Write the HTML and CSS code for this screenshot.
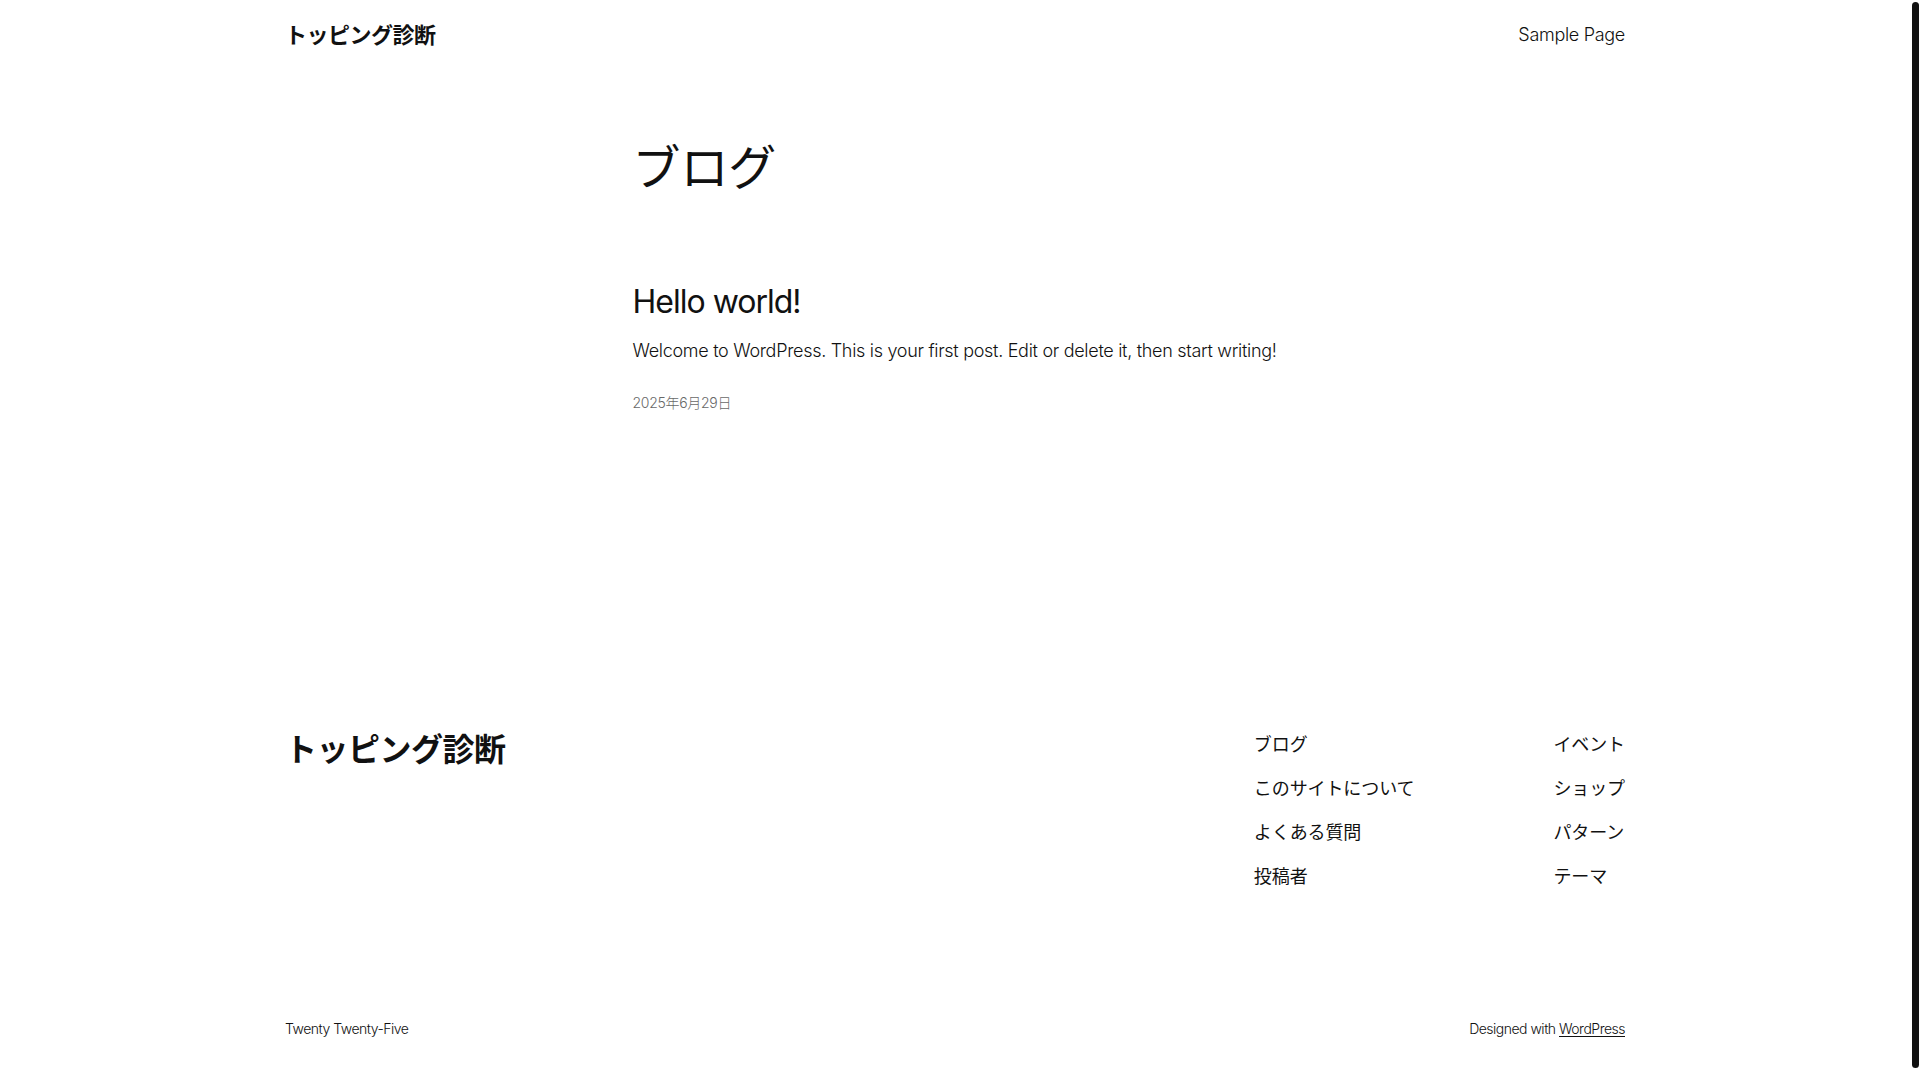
FILE: index.html
```html
<!DOCTYPE html>
<html lang="ja">
<head>
<meta charset="utf-8">
<title>ブログ – トッピング診断</title>
<link rel="stylesheet" href="styles.css">
</head>
<body>
<header class="site-header wrap">
  <p class="site-title"><a href="#">トッピング診断</a></p>
  <nav class="header-nav"><a href="#">Sample Page</a></nav>
</header>

<main class="site-main">
  <h1 class="query-title">ブログ</h1>
  <article class="post">
    <h2 class="post-title"><a href="#">Hello world!</a></h2>
    <p class="post-excerpt">Welcome to WordPress. This is your first post. Edit or delete it, then start writing!</p>
    <p class="post-date">2025年6月29日</p>
  </article>
</main>

<footer class="site-footer">
  <div class="footer-top wrap">
    <p class="footer-title"><a href="#">トッピング診断</a></p>
    <div class="footer-navs">
      <ul class="footer-nav">
        <li><a href="#">ブログ</a></li>
        <li><a href="#">このサイトについて</a></li>
        <li><a href="#">よくある質問</a></li>
        <li><a href="#">投稿者</a></li>
      </ul>
      <ul class="footer-nav">
        <li><a href="#">イベント</a></li>
        <li><a href="#">ショップ</a></li>
        <li><a href="#">パターン</a></li>
        <li><a href="#">テーマ</a></li>
      </ul>
    </div>
  </div>
  <div class="footer-bottom wrap">
    <p class="credit">Twenty Twenty-Five</p>
    <p class="credit">Designed with <a href="#" class="credit-link">WordPress</a></p>
  </div>
</footer>

<div class="scrollbar-thumb" aria-hidden="true"></div>
</body>
</html>
```

FILE: styles.css
```css
html {
  background: #ffffff;
}

body {
  margin: 0 10px 0 0;
  background: #ffffff;
  color: #111111;
  font-family: Inter, "Noto Sans CJK JP", sans-serif;
  font-weight: 300;
  font-size: 18px;
  line-height: 1.4;
  letter-spacing: -0.3px;
}

a {
  color: inherit;
  text-decoration: none;
}

p, h1, h2, ul {
  margin: 0;
  padding: 0;
}

.wrap {
  max-width: 1340px;
  margin-left: auto;
  margin-right: auto;
}

/* Header */
.site-header {
  display: flex;
  justify-content: space-between;
  align-items: center;
  padding-top: 18px;
  padding-bottom: 20px;
}

.site-title {
  font-family: "Noto Sans CJK JP", sans-serif;
  font-weight: 700;
  font-size: 22px;
  line-height: 1.4;
  letter-spacing: -0.5px;
}

.header-nav {
  font-size: 18px;
  padding-top: 2px;
}

/* Main */
.site-main {
  width: 645px;
  margin: 0 auto;
}

.query-title {
  font-family: "Noto Sans CJK JP", sans-serif;
  font-weight: 400;
  font-size: 48px;
  line-height: 1.125;
  letter-spacing: -0.1px;
  margin-top: 68px;
}

.post {
  padding-top: 93px;
}

.post-title {
  font-weight: 400;
  font-size: 32px;
  line-height: 1.125;
  letter-spacing: -1px;
}

.post-excerpt {
  margin-top: 18px;
  white-space: nowrap;
}

.post-date {
  margin-top: 30px;
  font-size: 14px;
  letter-spacing: -0.3px;
  color: #686868;
}

/* Footer */
.site-footer {
  padding-top: 312px;
  padding-bottom: 50px;
}

.footer-top {
  display: flex;
  justify-content: space-between;
  align-items: flex-start;
}

.footer-title {
  font-family: "Noto Sans CJK JP", sans-serif;
  font-weight: 700;
  font-size: 32px;
  line-height: 1.4;
  letter-spacing: -0.5px;
}

.footer-navs {
  display: flex;
  gap: 139px;
  padding-top: 6px;
}

.footer-nav {
  list-style: none;
  display: flex;
  flex-direction: column;
  gap: 18.8px;
  font-family: "Noto Sans CJK JP", sans-serif;
  font-weight: 400;
  font-size: 18px;
  line-height: 1.4;
  letter-spacing: -0.1px;
}

.footer-bottom {
  display: flex;
  justify-content: space-between;
  margin-top: 131px;
}

.credit {
  font-size: 14px;
  letter-spacing: -0.5px;
}

.credit-link {
  text-decoration: underline;
  text-underline-offset: 2px;
}

/* imitation of the browser's scrollbar thumb seen in the screenshot */
.scrollbar-thumb {
  position: fixed;
  top: 2px;
  right: 1px;
  width: 7px;
  height: 1066px;
  border-radius: 4px;
  background: #111111;
}
```
